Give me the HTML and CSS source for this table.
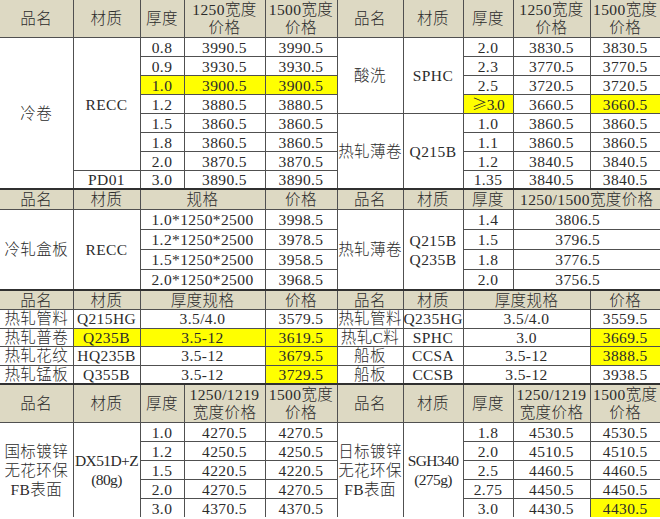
FILE: index.html
```html
<!DOCTYPE html>
<html lang="zh-CN">
<head>
<meta charset="utf-8">
<title>价格表</title>
<link rel="stylesheet" href="styles.css">
</head>
<body>
<table class="price">
  <colgroup>
    <col><col><col><col><col><col><col><col><col><col>
  </colgroup>
  <tbody>
    <tr class="hd2 first">
      <td>品名</td><td>材质</td><td>厚度</td><td>1250宽度<br>价格</td><td>1500宽度<br>价格</td>
      <td>品名</td><td>材质</td><td>厚度</td><td>1250宽度<br>价格</td><td>1500宽度<br>价格</td>
    </tr>
    <tr class="r19">
      <td rowspan="8">冷卷</td><td rowspan="7">RECC</td><td>0.8</td><td>3990.5</td><td>3990.5</td>
      <td rowspan="4">酸洗</td><td rowspan="4">SPHC</td><td>2.0</td><td>3830.5</td><td>3830.5</td>
    </tr>
    <tr class="r19">
      <td>0.9</td><td>3930.5</td><td>3930.5</td>
      <td>2.3</td><td>3770.5</td><td>3770.5</td>
    </tr>
    <tr class="r19">
      <td class="hl">1.0</td><td class="hl">3900.5</td><td class="hl">3900.5</td>
      <td>2.5</td><td>3720.5</td><td>3720.5</td>
    </tr>
    <tr class="r19">
      <td>1.2</td><td>3880.5</td><td>3880.5</td>
      <td class="hl tight"><span class="cjk">≥</span>3.0</td><td>3660.5</td><td class="hl">3660.5</td>
    </tr>
    <tr class="r19">
      <td>1.5</td><td>3860.5</td><td>3860.5</td>
      <td rowspan="4">热轧薄卷</td><td rowspan="4">Q215B</td><td>1.0</td><td>3860.5</td><td>3860.5</td>
    </tr>
    <tr class="r19">
      <td>1.8</td><td>3860.5</td><td>3860.5</td>
      <td>1.1</td><td>3860.5</td><td>3860.5</td>
    </tr>
    <tr class="r19">
      <td>2.0</td><td>3870.5</td><td>3870.5</td>
      <td>1.2</td><td>3840.5</td><td>3840.5</td>
    </tr>
    <tr class="r16">
      <td>PD01</td><td>3.0</td><td>3890.5</td><td>3890.5</td>
      <td>1.35</td><td>3840.5</td><td>3840.5</td>
    </tr>

    <tr class="hd1">
      <td>品名</td><td>材质</td><td colspan="2">规格</td><td>价格</td>
      <td>品名</td><td>材质</td><td>厚度</td><td colspan="2">1250/1500宽度价格</td>
    </tr>
    <tr class="r20">
      <td rowspan="4">冷轧盒板</td><td rowspan="4">RECC</td><td colspan="2">1.0*1250*2500</td><td>3998.5</td>
      <td rowspan="4">热轧薄卷</td><td rowspan="4" class="lh">Q215B<br>Q235B</td><td>1.4</td><td colspan="2" class="shift">3806.5</td>
    </tr>
    <tr class="r20">
      <td colspan="2">1.2*1250*2500</td><td>3978.5</td>
      <td>1.5</td><td colspan="2" class="shift">3796.5</td>
    </tr>
    <tr class="r20">
      <td colspan="2">1.5*1250*2500</td><td>3958.5</td>
      <td>1.8</td><td colspan="2" class="shift">3776.5</td>
    </tr>
    <tr class="r20">
      <td colspan="2">2.0*1250*2500</td><td>3968.5</td>
      <td>2.0</td><td colspan="2" class="shift">3756.5</td>
    </tr>

    <tr class="hd1 short">
      <td>品名</td><td>材质</td><td colspan="2">厚度规格</td><td>价格</td>
      <td>品名</td><td>材质</td><td colspan="2">厚度规格</td><td>价格</td>
    </tr>
    <tr class="r18">
      <td>热轧管料</td><td>Q215HG</td><td colspan="2">3.5/4.0</td><td>3579.5</td>
      <td>热轧管料</td><td>Q235HG</td><td colspan="2">3.5/4.0</td><td>3559.5</td>
    </tr>
    <tr class="r18">
      <td>热轧普卷</td><td class="hl">Q235B</td><td colspan="2" class="hl">3.5-12</td><td class="hl">3619.5</td>
      <td>热轧C料</td><td>SPHC</td><td colspan="2">3.0</td><td class="hl">3669.5</td>
    </tr>
    <tr class="r18">
      <td>热轧花纹</td><td>HQ235B</td><td colspan="2">3.5-12</td><td class="hl">3679.5</td>
      <td>船板</td><td>CCSA</td><td colspan="2">3.5-12</td><td class="hl">3888.5</td>
    </tr>
    <tr class="r18">
      <td>热轧锰板</td><td>Q355B</td><td colspan="2">3.5-12</td><td class="hl">3729.5</td>
      <td>船板</td><td>CCSB</td><td colspan="2">3.5-12</td><td>3938.5</td>
    </tr>

    <tr class="hd2">
      <td>品名</td><td>材质</td><td>厚度</td><td>1250/1219<br>宽度价格</td><td>1500宽度<br>价格</td>
      <td>品名</td><td>材质</td><td>厚度</td><td>1250/1219<br>宽度价格</td><td>1500宽度<br>价格</td>
    </tr>
    <tr class="r19">
      <td rowspan="5" class="lh">国标镀锌<br>无花环保<br>FB表面</td><td rowspan="5" class="lh tight">DX51D+Z<br>(80g)</td><td>1.0</td><td>4270.5</td><td>4270.5</td>
      <td rowspan="5" class="lh">日标镀锌<br>无花环保<br>FB表面</td><td rowspan="5" class="lh tight">SGH340<br>(275g)</td><td>1.8</td><td>4530.5</td><td>4530.5</td>
    </tr>
    <tr class="r19">
      <td>1.2</td><td>4250.5</td><td>4250.5</td>
      <td>2.0</td><td>4510.5</td><td>4510.5</td>
    </tr>
    <tr class="r19">
      <td>1.5</td><td>4220.5</td><td>4220.5</td>
      <td>2.5</td><td>4460.5</td><td>4460.5</td>
    </tr>
    <tr class="r19">
      <td>2.0</td><td>4270.5</td><td>4270.5</td>
      <td>2.75</td><td>4450.5</td><td>4450.5</td>
    </tr>
    <tr class="r19">
      <td>3.0</td><td>4370.5</td><td>4370.5</td>
      <td>3.0</td><td>4430.5</td><td class="hl">4430.5</td>
    </tr>
  </tbody>
</table>
</body>
</html>
```

FILE: styles.css
```css
html, body {
  margin: 0;
  padding: 0;
  background: #ffffff;
}

body {
  width: 660px;
  height: 519px;
  overflow: hidden;
}

.price {
  width: 660px;
  table-layout: fixed;
  border-collapse: collapse;
  border-style: hidden;
  font-family: "Liberation Serif", "Noto Sans CJK SC", serif;
  font-size: 15.5px;
  font-weight: 300;
  letter-spacing: 0.4px;
  color: #2b2b2b;
}

.price col:nth-child(1) { width: 73px; }
.price col:nth-child(2) { width: 67px; }
.price col:nth-child(3) { width: 44px; }
.price col:nth-child(4) { width: 81px; }
.price col:nth-child(5) { width: 72px; }
.price col:nth-child(6) { width: 66px; }
.price col:nth-child(7) { width: 60px; }
.price col:nth-child(8) { width: 50px; }
.price col:nth-child(9) { width: 77px; }
.price col:nth-child(10) { width: 70px; }

.price td {
  border: 1px solid #505050;
  padding: 0;
  text-align: center;
  vertical-align: middle;
  line-height: 17px;
  white-space: nowrap;
}

.price tr.hd1 td,
.price tr.hd2 td {
  background: #ddd9c3;
  border-top: 2px solid #303030;
}

.price tr.hd2 td {
  height: 37px;
  line-height: 18px;
}

.price tr.hd1 td {
  height: 19px;
}

.price tr.hd1.short td {
  height: 18px;
}

.price tr.r19 td { height: 18px; }
.price tr.r16 td { height: 15px; }
.price tr.r20 td { height: 19px; }
.price tr.r18 td { height: 17.5px; }

.price td.lh {
  line-height: 19px;
}

.price td.tight {
  letter-spacing: -0.6px;
}

.price td.shift {
  padding-right: 18px;
}

.price td.hl {
  background: #ffff00;
}

.cjk {
  font-family: "Noto Sans CJK SC", sans-serif;
  line-height: 1;
}
```
